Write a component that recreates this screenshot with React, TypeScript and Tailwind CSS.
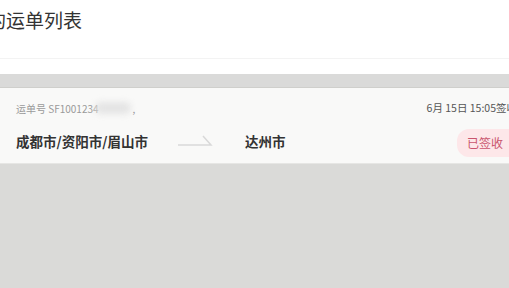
import React from "react";

export default function App() {
  return (
    <div
      className="w-[509px] h-[288px] overflow-hidden bg-[#dcdcda] flex flex-col"
      style={{ fontFamily: '"Noto Sans", "Noto Sans CJK SC", sans-serif' }}
    >
      <div className="h-[74px] bg-white flex flex-col shrink-0">
        <div className="h-[59px] flex items-start pt-[9px] border-b border-[#f3f3f3] -ml-[13px]">
          <span className="text-[19px] text-[#333] leading-[22px]" style={{ fontFamily: '"Noto Sans CJK SC", sans-serif' }}>
            的运单列表
          </span>
        </div>
      </div>
      <div className="h-[14px] bg-[#dadad9] border-b border-[#cfcfcc] shrink-0" />
      <div className="h-[75px] bg-[#f9f9f8] px-[16px] pt-[12px] flex flex-col shrink-0" style={{ fontFamily: '"Noto Sans CJK SC", sans-serif' }}>
        <div className="flex items-center justify-between h-[16px]">
          <div className="flex items-center text-[10px] text-[#9a9a9a]">
            <span>运单号 SF1001234</span>
            <span className="w-[36px] h-[12px] rounded-full bg-[#e4e4e4] blur-[3px] -ml-[4px]" />
            <span className="ml-[2px]">,</span>
          </div>
          <span className="text-[10.5px] text-[#555] whitespace-nowrap -mr-[24px]">6月 15日 15:05签收</span>
        </div>
        <div className="flex items-center mt-[10px] h-[30px]">
          <span className="text-[13.5px] font-semibold text-[#333] w-[162px]">成都市/资阳市/眉山市</span>
          <svg width="36" height="12" viewBox="0 0 36 12" className="-mt-[2px]">
            <path d="M0 11 H33 L25 2" fill="none" stroke="#d9d9d9" strokeWidth="1.5" />
          </svg>
          <span className="ml-[31px] text-[13.5px] font-semibold text-[#333]">达州市</span>
          <div className="ml-auto -mr-[24px] mt-[3px] h-[28px] px-[10px] rounded-l-[12px] bg-[#fde7e9] flex items-center">
            <span className="text-[12px] text-[#c9546d] pr-[4px]">已签收</span>
          </div>
        </div>
      </div>
      <div className="flex-1 bg-[#dadad8] border-t border-[#e6e6e4]" />
    </div>
  );
}
